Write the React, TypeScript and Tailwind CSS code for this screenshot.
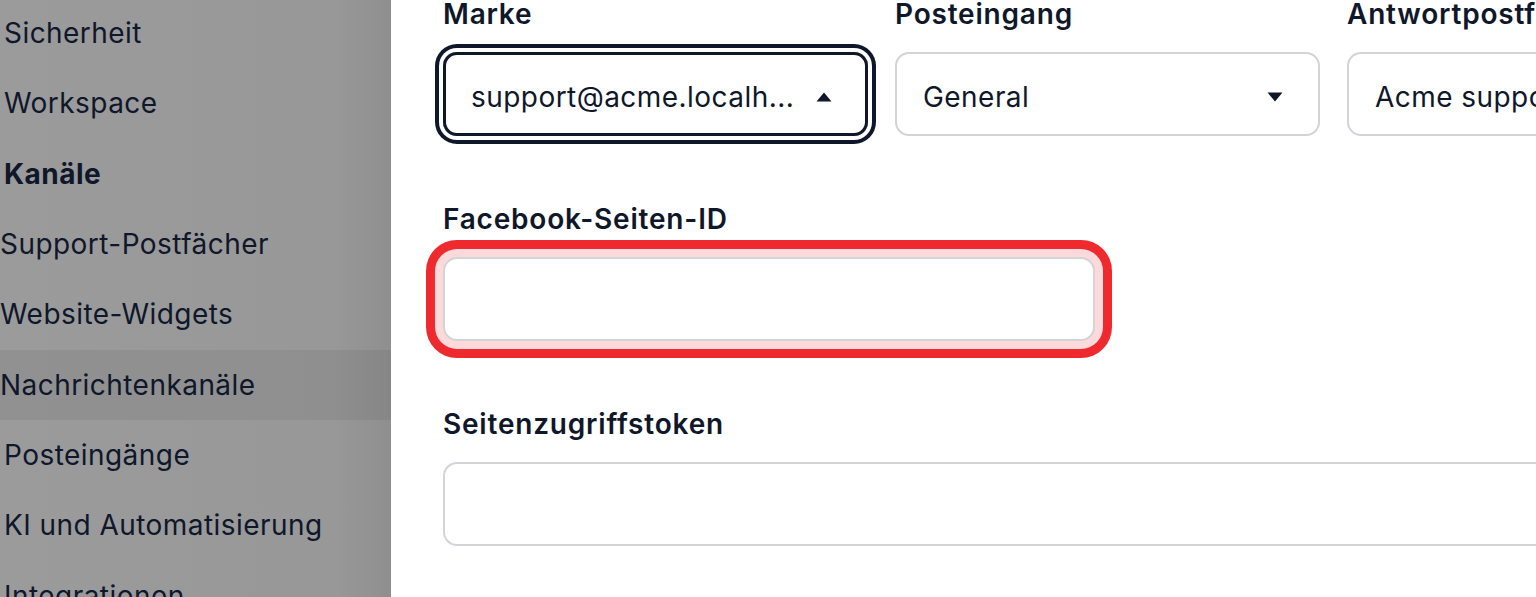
import React from "react";

const font = { fontFamily: "Inter, 'Noto Sans', sans-serif" };

const navItems: { label: string; indent: boolean; bold?: boolean; active?: boolean }[] = [
  { label: "Sicherheit", indent: true },
  { label: "Workspace", indent: true },
  { label: "Kanäle", indent: true, bold: true },
  { label: "Support-Postfächer", indent: false },
  { label: "Website-Widgets", indent: false },
  { label: "Nachrichtenkanäle", indent: false, active: true },
  { label: "Posteingänge", indent: true },
  { label: "KI und Automatisierung", indent: true },
  { label: "Integrationen", indent: true },
];

function Caret({ up }: { up?: boolean }) {
  return (
    <svg width="16" height="10" viewBox="0 0 16 10" className="shrink-0">
      {up ? (
        <path d="M8 0.5 L15.5 9.5 L0.5 9.5 Z" fill="#0f172a" />
      ) : (
        <path d="M0.5 0.5 L15.5 0.5 L8 9.5 Z" fill="#0f172a" />
      )}
    </svg>
  );
}

function Label({ children }: { children: React.ReactNode }) {
  return (
    <div className="text-[28px] leading-[36px] font-semibold tracking-[0.8px] text-[#0f172a] mb-[20px] whitespace-nowrap">
      {children}
    </div>
  );
}

export default function App() {
  return (
    <div className="w-[1536px] h-[597px] overflow-hidden flex bg-white" style={font}>
      <aside className="w-[391px] shrink-0 h-full bg-linear-to-r from-[#9b9b9b] via-[#989898] via-85% to-[#8f8f8f] overflow-hidden">
        <div className="-mt-[2px]">
          {navItems.map((it) => (
            <div
              key={it.label}
              className={
                "h-[70.33px] flex items-center text-[28px] tracking-[0.45px] text-[#0f172a] whitespace-nowrap " +
                (it.indent ? "pl-[4px] " : "pl-0 ") +
                (it.bold ? "font-bold " : "font-normal ") +
                (it.active ? "bg-black/[0.06]" : "")
              }
            >
              {it.label}
            </div>
          ))}
        </div>
      </aside>

      <main className="flex-1 min-w-0 overflow-hidden pl-[52px] -mt-[4px]">
        <div className="flex gap-[27px]">
          <div className="w-[425px] shrink-0">
            <Label>Marke</Label>
            <div className="h-[84px] rounded-[14px] border-[3px] border-[#0f172a] ring-4 ring-[#0f172a] ring-offset-4 ring-offset-white flex items-center justify-between pt-[6px] pl-[25px] pr-[33px] text-[28px] tracking-[0.45px] text-[#0f172a]">
              <span className="truncate">support@acme.localh...</span>
              <Caret up />
            </div>
          </div>
          <div className="w-[425px] shrink-0">
            <Label>Posteingang</Label>
            <div className="h-[84px] rounded-[14px] border-2 border-[#d4d4d8] flex items-center justify-between pt-[6px] pl-[26px] pr-[35px] text-[28px] tracking-[0.45px] text-[#0f172a]">
              <span>General</span>
              <Caret />
            </div>
          </div>
          <div className="w-[425px] shrink-0">
            <Label>Antwortpostfach</Label>
            <div className="h-[84px] rounded-[14px] border-2 border-[#d4d4d8] flex items-center justify-between pt-[6px] pl-[26px] pr-[35px] text-[28px] tracking-[0.45px] text-[#0f172a]">
              <span>Acme support</span>
              <Caret />
            </div>
          </div>
        </div>

        <div className="mt-[65px] w-[652px]">
          <Label>Facebook-Seiten-ID</Label>
          <div className="h-[84px] rounded-[14px] border-2 border-[#d4d4d8] bg-white shadow-[0_0_0_8px_#fcd9da,0_0_0_17px_#ee2a2e]" />
        </div>

        <div className="mt-[65px] w-[1200px]">
          <Label>Seitenzugriffstoken</Label>
          <div className="h-[84px] rounded-[14px] border-2 border-[#d4d4d8] bg-white" />
        </div>
      </main>
    </div>
  );
}
